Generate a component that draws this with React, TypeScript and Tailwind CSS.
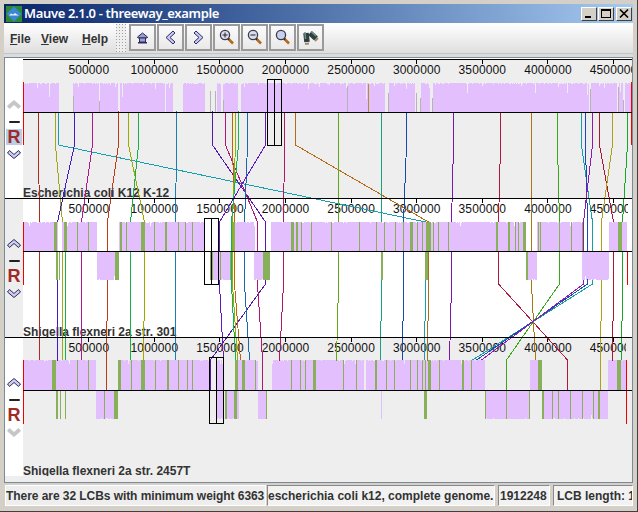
const SANS = "font-['Liberation_Sans',Arial,sans-serif]"

// page coordinates, the chart svg uses a viewBox that starts at the main panel corner
type Lcb = { color: string; points: number[] }

const lcbs: Lcb[] = [
  { color: '#b02a20', points: [38.5, 39.5, 39.5] },
  { color: '#a0a818', points: [55.5, 62.5, 62.5] },
  { color: '#14a0b0', points: [58.5, 425.5, 424.5] },
  { color: '#4818c0', points: [74.5, 57.5, 57.5] },
  { color: '#b01890', points: [92.5, 81.5, 81.5] },
  { color: '#c03a18', points: [118.5, 107.5, 106.5] },
  { color: '#a0a800', points: [128.5, 144.5, 143.5] },
  { color: '#18b048', points: [138.5, 130.5, 130.5] },
  { color: '#1880b0', points: [176.5, 175.5, 175.5] },
  { color: '#5818b0', points: [212.5, 265.5, 210.5] },
  { color: '#b01878', points: [225.5, 257.5, 262.5] },
  { color: '#c06408', points: [232.5, 234.5, 240.5] },
  { color: '#90b000', points: [235.5, 232.5, 237.5] },
  { color: '#18b058', points: [238.5, 231.5, 235.5] },
  { color: '#1868b0', points: [247.5, 244.5, 249.5] },
  { color: '#6418c0', points: [265.5, 219.5, 223.5] },
  { color: '#b01868', points: [284.5, 283.5, 279.5] },
  { color: '#b06c18', points: [295.5, 428.5, 427.5] },
  { color: '#60a818', points: [338.5, 338.5, 336.5] },
  { color: '#18a080', points: [381.5, 381.5, 380.5] },
  { color: '#1848b0', points: [406.5, 403.5, 402.5] },
  { color: '#7818b0', points: [453.5, 451.5, 449.5] },
  { color: '#b01840', points: [500.5, 498.5, 567.5] },
  { color: '#a87818', points: [531.5, 531.5, 535.5] },
  { color: '#38a818', points: [557.5, 559.5, 506.5] },
  { color: '#18a0a0', points: [581.5, 592.5, 472.5] },
  { color: '#1848c0', points: [585.5, 587.5, 476.5] },
  { color: '#9018b0', points: [592.5, 583.5, 481.5] },
  { color: '#a81830', points: [599.5, 613.5, 612.5] },
  { color: '#b0a018', points: [612.5, 601.5, 600.5] },
  { color: '#18a828', points: [627.5, 622.5, 621.5] },
]

const rnd = (x: number, s: number) => {
  const v = Math.sin(x * 12.9898 + s * 78.233) * 43758.5453
  return v - Math.floor(v)
}

// one column per pixel so the top edge of the similarity plot stays rough
function plotPath(spans: number[][], edge: number, base: number, seed: number, rough: number) {
  let d = ''
  for (const [a, b] of spans) {
    for (let x = a; x < b; x++) {
      const r = rnd(x, seed)
      let cut = 0
      if (rough > 1) {
        if (r > 0.985) cut = 8 + rnd(x, seed + 1) * 8
        else if (r > 0.94) cut = 2 + rnd(x, seed + 1) * 4
        else if (r > 0.7) cut = 1
      } else if (r > 0.985) cut = 4
      else if (r > 0.85) cut = 1
      const from = base > edge ? edge + Math.round(cut) : edge - Math.round(cut)
      const y0 = Math.min(from, base)
      const y1 = Math.max(from, base)
      d += `M${x} ${y0}H${x + 1}V${y1}H${x}Z`
    }
  }
  return d
}

const PURPLE = '#e3bffd'
const GREEN = '#88b058'

const strands = [
  {
    seed: 1,
    top: 83,
    center: 112,
    bottom: null as number | null,
    spans: [[24, 59], [73, 99], [100, 118], [120, 165], [166, 173], [183, 205], [217, 221], [223, 238], [241, 265], [265, 347], [348, 385], [389, 415], [421, 430], [433, 589], [591, 617], [619, 623], [625, 631]],
    below: [] as number[][],
    greens: [] as number[][],
    greensBelow: [] as number[][],
  },
  {
    seed: 5,
    top: 222,
    center: 251,
    bottom: 280,
    spans: [[24, 58], [62, 97], [119, 205], [234, 255], [271, 410], [413, 526], [537, 583], [609, 627]],
    below: [[97, 119], [212, 231], [254, 270], [381, 383], [526, 537], [582, 609]],
    greens: [[54, 3], [64, 3], [77, 1], [88, 1], [120, 2], [126, 1], [141, 4], [154, 1], [165, 2], [178, 1], [185, 1], [192, 1], [233, 2], [291, 3], [296, 2], [301, 1], [311, 1], [331, 1], [359, 1], [376, 1], [384, 1], [395, 1], [403, 1], [410, 3], [417, 1], [422, 1], [426, 5], [433, 1], [438, 1], [448, 1], [496, 2], [508, 2], [515, 1], [518, 1], [523, 3], [538, 1], [540, 1], [559, 1], [571, 1], [582, 1], [618, 4]],
    greensBelow: [[56, 1], [57, 1], [59, 1], [115, 4], [210, 3], [220, 1], [230, 1], [263, 7], [381, 2], [425, 3], [526, 2]],
  },
  {
    seed: 9,
    top: 360,
    center: 390,
    bottom: 419,
    spans: [[24, 96], [118, 209], [216, 224], [235, 258], [272, 364], [366, 485], [530, 542], [608, 626]],
    below: [[96, 118], [216, 224], [225, 234], [237, 239], [258, 267], [381, 382], [486, 530], [544, 608]],
    greens: [[52, 4], [77, 1], [88, 1], [118, 3], [131, 1], [141, 4], [155, 1], [167, 2], [178, 1], [187, 1], [192, 1], [209, 1], [235, 3], [242, 3], [255, 1], [291, 1], [300, 1], [305, 1], [313, 3], [343, 1], [356, 1], [375, 2], [386, 1], [394, 1], [410, 1], [417, 1], [422, 1], [425, 1], [428, 3], [439, 1], [462, 2], [471, 1], [538, 4], [617, 4]],
    greensBelow: [[56, 1], [57, 1], [60, 1], [65, 1], [104, 1], [114, 4], [225, 2], [234, 3], [266, 1], [424, 3], [485, 1], [506, 1], [529, 1], [542, 2], [552, 1], [558, 1], [570, 1], [582, 1], [593, 1], [598, 2]],
  },
]

const grayMarks = [[73, 96], [99, 101], [210, 91], [215, 91], [223, 100], [347, 86], [388, 93], [416, 93], [420, 98], [432, 98], [590, 89], [618, 87], [623, 100]]

const boxes = [
  { x: 267, mid: 274, y: 79, h: 66 },
  { x: 204, mid: 211, y: 218, h: 66 },
  { x: 209, mid: 216, y: 357, h: 66 },
]

const tickValues = [500000, 1000000, 1500000, 2000000, 2500000, 3000000, 3500000, 4000000, 4500000]

function Chevron({ up, disabled }: { up?: boolean; disabled?: boolean }) {
  return (
    <svg width="14" height="9" viewBox="0 0 14 9" className={up ? '' : 'rotate-180'}>
      <polygon
        points="7,0.5 13.5,6 11.5,8.5 7,4.5 2.5,8.5 0.5,6"
        fill={disabled ? '#c6c6c6' : '#ccccf4'}
        stroke={disabled ? '#c6c6c6' : '#2c2c50'}
        strokeWidth="1"
      />
    </svg>
  )
}

function Gutter({ selected, upOff, downOff, className }: { selected?: boolean; upOff?: boolean; downOff?: boolean; className: string }) {
  return (
    <div className={`w-[18px] shrink-0 flex flex-col items-center pt-[41px] ${className}`}>
      <Chevron up disabled={upOff} />
      <div className="mt-[12px] w-[11px] h-[2px] rounded-full bg-[#222]" />
      <div className={`mt-[6px] w-[16px] h-[16px] flex items-center justify-center text-[18px] leading-none font-bold text-[#a02a28] ${selected ? 'bg-[#b8cfe5]' : ''}`}>
        R
      </div>
      <div className="mt-[5px] flex">
        <Chevron disabled={downOff} />
      </div>
    </div>
  )
}

function Track({ name, rulerWidth, light, gutter }: { name: string; rulerWidth: number; light?: boolean; gutter: React.ReactNode }) {
  return (
    <div className="h-[139px] flex">
      {gutter}
      <div className={`flex-1 min-w-0 flex flex-col justify-between overflow-hidden ${light ? 'bg-white' : 'bg-[#eeeeee]'}`}>
        <div className="overflow-hidden" style={{ width: rulerWidth }}>
          <div className="flex pl-[33px] w-[700px]">
            {tickValues.map(v => (
              <div key={v} className="w-[65.6px] shrink-0 flex flex-col items-center">
                <div className="w-px h-[5px] bg-black" />
                <span className="text-[12px] leading-[12px] tracking-[0.13px] text-[#111]">{v}</span>
              </div>
            ))}
          </div>
        </div>
        <p className="text-[12px] leading-[12px] -mb-px font-bold text-[#333] whitespace-nowrap">{name}</p>
      </div>
    </div>
  )
}

function Chart() {
  const top = 111
  return (
    <svg className="absolute left-0 top-0 pointer-events-none" width="627" height="424" viewBox="5 58 627 424" shapeRendering="crispEdges">
      {lcbs.map(l => (
        <polyline
          key={l.color + l.points[0]}
          fill="none"
          stroke={l.color}
          strokeWidth="1"
          points={`${l.points[0]},${top} ${l.points[0]},145 ${l.points[1]},222 ${l.points[1]},284 ${l.points[2]},360 ${l.points[2]},390`}
        />
      ))}
      <line x1="65.5" y1="222" x2="65.5" y2="390" stroke="#18b048" />
      {strands.map(s => (
        <g key={s.seed}>
          <path d={plotPath(s.spans, s.top, s.center, s.seed, s.bottom === null ? 2 : 1)} fill={PURPLE} />
          {s.bottom !== null && <path d={plotPath(s.below, s.bottom, s.center, s.seed + 2, 1)} fill={PURPLE} />}
          {s.greens.map(([x, w]) => (
            <rect key={x} x={x} y={s.top} width={w} height={s.center - s.top} fill={GREEN} />
          ))}
          {s.greensBelow.map(([x, w]) => (
            <rect key={x} x={x} y={s.center} width={w} height={(s.bottom ?? 0) - s.center} fill={GREEN} />
          ))}
        </g>
      ))}
      {grayMarks.map(([x, y]) => (
        <rect key={x} x={x} y={y} width="1" height={112 - y} fill="#b4b4b4" />
      ))}
      <rect x="368" y="84" width="1" height="28" fill="#b09030" />
      {/* red genome end marks */}
      <path d="M23.5 82V145M631.5 82V145M23.5 222V285M627.5 251V285M23.5 360V424M626.5 360V424" stroke="#f00000" fill="none" />
      {/* centre lines and strand separators */}
      <path d="M23 112.5H632M23 251.5H632M23 390.5H632" stroke="#000" fill="none" />
      <path d="M5 198.5H632M5 337.5H632M23 59.5H632" stroke="#000" fill="none" />
      {boxes.map(b => (
        <g key={b.x} fill="none" stroke="#000">
          <rect x={b.x + 0.5} y={b.y + 0.5} width="14" height={b.h} />
          <line x1={b.mid + 0.5} y1={b.y} x2={b.mid + 0.5} y2={b.y + b.h} />
        </g>
      ))}
    </svg>
  )
}

function ToolButton({ children }: { children: React.ReactNode }) {
  return (
    <button className="w-[27px] h-[27px] shrink-0 border-2 border-[#9a9a9a] bg-gradient-to-b from-[#fbfbfb] to-[#e9e9e9] flex items-center justify-center p-0">
      <svg width="23" height="23" viewBox="2 2 23 23">{children}</svg>
    </button>
  )
}

function Magnifier({ mark }: { mark?: 'plus' | 'minus' }) {
  return (
    <>
      <line x1="15.5" y1="15" x2="20" y2="19.5" stroke="#b46a1e" strokeWidth="2.6" />
      <line x1="14.5" y1="14" x2="16" y2="15.5" stroke="#222" strokeWidth="2" />
      <circle cx="12" cy="11" r="4.6" fill={mark ? '#dcdcf0' : '#c8d0f0'} stroke="#3a3a4a" strokeWidth="1.3" />
      {mark && <line x1="9.5" y1="11" x2="14.5" y2="11" stroke="#222" strokeWidth="1" />}
      {mark === 'plus' && <line x1="12" y1="8.5" x2="12" y2="13.5" stroke="#222" strokeWidth="1" />}
    </>
  )
}

export default function App() {
  return (
    <div className={`${SANS} w-[638px] h-[512px] flex flex-col bg-[#d4d0c8] pt-[4px] px-[4px] pb-[5px] border-r border-b border-[#404040] text-[#333] overflow-hidden`}>
      {/* title bar */}
      <div className="h-[19px] shrink-0 flex items-center bg-gradient-to-r from-[#0a246a] to-[#a6caf0] pl-[2px] pr-[1px]">
        <svg width="16" height="16" viewBox="0 0 16 16" className="shrink-0">
          <rect width="16" height="16" fill="#2c8a34" />
          <polygon points="8,0.5 15.5,8 8,15.5 0.5,8" fill="#3c86d8" />
          <path d="M3 9.5L5 7.5L7 8.5L9 7L11 8.5L13 9.5Z" fill="#e8f0fa" />
        </svg>
        <span className="ml-[2px] text-[13px] font-semibold text-white font-['Noto_Sans',sans-serif] tracking-[-0.35px] whitespace-nowrap">Mauve 2.1.0 - threeway_example</span>
        <div className="ml-auto flex gap-[1px]">
          <div className="w-[16px] h-[14px] bg-[#d4d0c8] border border-t-white border-l-white border-r-[#404040] border-b-[#404040] flex items-end justify-start pl-[3px] pb-[2px]">
            <div className="w-[6px] h-[2px] bg-black" />
          </div>
          <div className="w-[16px] h-[14px] mr-[1px] bg-[#d4d0c8] border border-t-white border-l-white border-r-[#404040] border-b-[#404040] flex items-center justify-center">
            <div className="w-[10px] h-[9px] border border-black border-t-2" />
          </div>
          <div className="w-[16px] h-[14px] bg-[#d4d0c8] border border-t-white border-l-white border-r-[#404040] border-b-[#404040] flex items-center justify-center">
            <svg width="10" height="9" viewBox="0 0 10 9">
              <path d="M1 0.5L9 8.5M9 0.5L1 8.5" stroke="#000" strokeWidth="1.6" />
            </svg>
          </div>
        </div>
      </div>

      {/* menu and tools */}
      <div className="h-[30px] shrink-0 flex pt-px bg-gradient-to-b from-white to-[#dfdfdf]">
        <div className="flex items-center w-[112px] pl-[6px] text-[12px] font-bold text-[#333]">
          <span className="w-[31px]"><u>F</u>ile</span>
          <span className="w-[41px]"><u>V</u>iew</span>
          <span><u>H</u>elp</span>
        </div>
        <svg width="10" height="28" className="shrink-0 bg-[#efefef]">
          <defs>
            <pattern id="grip" width="3" height="3" patternUnits="userSpaceOnUse">
              <rect width="1" height="1" fill="#a0a0a0" />
            </pattern>
          </defs>
          <rect width="10" height="28" fill="url(#grip)" />
        </svg>
        <div className="ml-[3px] flex gap-[1px]">
          <ToolButton>
            <polygon points="13.5,9 18.5,13 18,14 9,14 8.5,13" fill="#9c9cd8" stroke="#2c2c58" />
            <rect x="10.5" y="14" width="6" height="4" fill="#a0a0d8" stroke="#2c2c58" />
            <rect x="9" y="18" width="9" height="1.5" fill="#2c2c58" />
          </ToolButton>
          <ToolButton>
            <polygon points="16,7 9,13.5 16,20 18,18 13,13.5 18,9" fill="#c8c8f4" stroke="#2c2c58" />
          </ToolButton>
          <ToolButton>
            <polygon points="11,7 18,13.5 11,20 9,18 14,13.5 9,9" fill="#c8c8f4" stroke="#2c2c58" />
          </ToolButton>
          <ToolButton><Magnifier mark="plus" /></ToolButton>
          <ToolButton><Magnifier mark="minus" /></ToolButton>
          <ToolButton><Magnifier /></ToolButton>
          <ToolButton>
            <line x1="9" y1="9" x2="10" y2="18" stroke="#2f3f3f" strokeWidth="5.5" />
            <line x1="13" y1="9" x2="19" y2="14.5" stroke="#2f3f3f" strokeWidth="5.5" />
            <line x1="8" y1="8" x2="8.5" y2="15" stroke="#6f8f8c" strokeWidth="1.5" />
            <line x1="14" y1="7.5" x2="19" y2="12" stroke="#6f8f8c" strokeWidth="1.5" />
            <line x1="8" y1="20" x2="12" y2="19.5" stroke="#a88a66" strokeWidth="2" />
            <line x1="18" y1="17" x2="21" y2="14" stroke="#a88a66" strokeWidth="2" />
          </ToolButton>
        </div>
      </div>
      <div className="h-[4px] shrink-0 bg-[#dcdcdc] border-t border-[#c4c4c4]" />

      {/* three genome tracks */}
      <div className="relative h-[426px] shrink-0 border border-[#7a8a99] bg-[#eeeeee] overflow-hidden">
        <div className="h-px bg-white" />
        <Track name="Escherichia coli K12 K-12" rulerWidth={609} gutter={<Gutter selected upOff className="bg-white" />} />
        <Track name="Shigella flexneri 2a str. 301" rulerWidth={605} light gutter={<Gutter className="bg-[#eeeeee]" />} />
        <Track name="Shigella flexneri 2a str. 2457T" rulerWidth={603} gutter={<Gutter downOff className="bg-white" />} />
        <Chart />
      </div>

      {/* status bar */}
      <div className="mt-[2px] h-[21px] shrink-0 flex text-[12px] font-bold text-[#333] whitespace-nowrap">
        <div className="w-[261px] ml-px overflow-hidden bg-[#eeeeee] border border-white flex items-center tracking-[-0.06px]">There are 32 LCBs with minimum weight 6363</div>
        <div className="ml-px w-[228px] overflow-hidden bg-[#f2f2f2] border border-t-[#8a8a8a] border-l-[#8a8a8a] border-r-white border-b-white flex items-center">escherichia coli k12, complete genome.</div>
        <div className="ml-[3px] w-[52px] overflow-hidden bg-[#f2f2f2] border border-t-[#8a8a8a] border-l-[#8a8a8a] border-r-white border-b-white flex items-center pl-px">1912248</div>
        <div className="ml-[3px] flex-1 overflow-hidden bg-[#f2f2f2] border border-t-[#8a8a8a] border-l-[#8a8a8a] border-r-white border-b-white flex items-center pl-[3px]">LCB length: 14</div>
      </div>
    </div>
  )
}
